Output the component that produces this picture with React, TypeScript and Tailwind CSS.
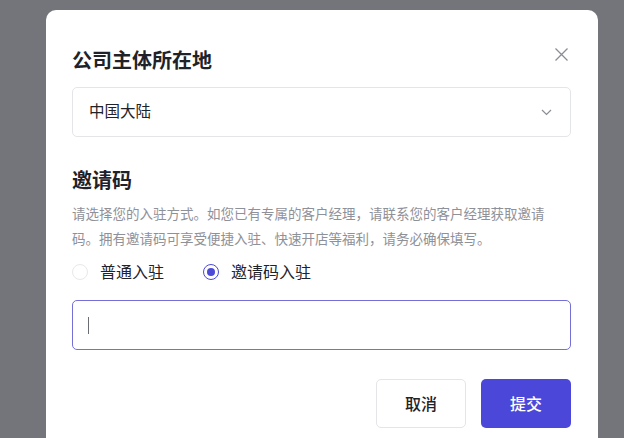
import { useState } from 'react';

const FONT = "font-['Inter','Noto_Sans_CJK_SC',sans-serif]";

export default function App() {
  const [mode, setMode] = useState<'normal' | 'invite'>('invite');

  return (
    <div className={`${FONT} h-[438px] w-[624px] overflow-hidden bg-[#74757b]`}>
      {/* Dialog */}
      <div className="relative ml-[46px] mt-[10px] h-[460px] w-[552px] rounded-[10px] bg-white pl-[26px] pr-[27px] pt-[37px]">
        <button className="absolute right-[29px] top-[37px] text-[#8b8d94]">
          <svg width="15" height="15" viewBox="0 0 15 15" fill="none" stroke="currentColor" strokeWidth="1.3">
            <path d="M1.5 1.5l12 12M13.5 1.5l-12 12" />
          </svg>
        </button>

        <h2 className="text-[20px] font-semibold leading-[28px] text-[#1f2329]">公司主体所在地</h2>

        {/* Select */}
        <div className="mt-3 flex h-[50px] items-center justify-between rounded-[5px] border border-[#e4e5e9] pl-4 pr-[18px]">
          <span className="text-[15.5px] text-[#1f2329]">中国大陆</span>
          <svg width="11" height="7" viewBox="0 0 11 7" fill="none" stroke="#8b8d94" strokeWidth="1.2">
            <path d="M1 1l4.5 4.5L10 1" />
          </svg>
        </div>

        <h2 className="mt-[30px] text-[20px] font-semibold leading-[28px] text-[#1f2329]">邀请码</h2>
        <p className="mt-[7px] max-w-[482px] text-[13.5px] leading-[25px] text-[#8f9199]">
          请选择您的入驻方式。如您已有专属的客户经理，请联系您的客户经理获取邀请码。拥有邀请码可享受便捷入驻、快速开店等福利，请务必确保填写。
        </p>

        {/* Radios */}
        <div className="mt-[8px] flex h-6 items-center gap-[39px] text-[16px] text-[#1f2329]">
          <label className="flex items-center gap-3" onClick={() => setMode('normal')}>
            <span
              className={
                mode === 'normal'
                  ? 'flex h-4 w-4 items-center justify-center rounded-full border-[1.5px] border-[#4c4ad6]'
                  : 'h-4 w-4 rounded-full border border-[#e7e8ec]'
              }
            >
              {mode === 'normal' && <span className="h-2 w-2 rounded-full bg-[#4c4ad6]" />}
            </span>
            普通入驻
          </label>
          <label className="flex items-center gap-3" onClick={() => setMode('invite')}>
            <span
              className={
                mode === 'invite'
                  ? 'flex h-4 w-4 items-center justify-center rounded-full border-[1.5px] border-[#4c4ad6]'
                  : 'h-4 w-4 rounded-full border border-[#e7e8ec]'
              }
            >
              {mode === 'invite' && <span className="h-2 w-2 rounded-full bg-[#4c4ad6]" />}
            </span>
            邀请码入驻
          </label>
        </div>

        {/* Input */}
        <div className="mt-4 flex h-[50px] items-center rounded-[5px] border-[1.5px] border-[#7470d8] pl-[15px]">
          <span className="h-[17px] w-px bg-[#6b6d75]" />
        </div>

        {/* Actions */}
        <div className="mt-[29px] flex justify-end gap-[15px]">
          <button className="h-[49px] w-[90px] rounded-[5px] border border-[#e4e5e9] bg-white text-[16px] font-medium text-[#1f2329]">
            取消
          </button>
          <button className="h-[49px] w-[90px] rounded-[5px] bg-[#4a47d9] text-[16px] font-medium text-white">
            提交
          </button>
        </div>
      </div>
    </div>
  );
}
